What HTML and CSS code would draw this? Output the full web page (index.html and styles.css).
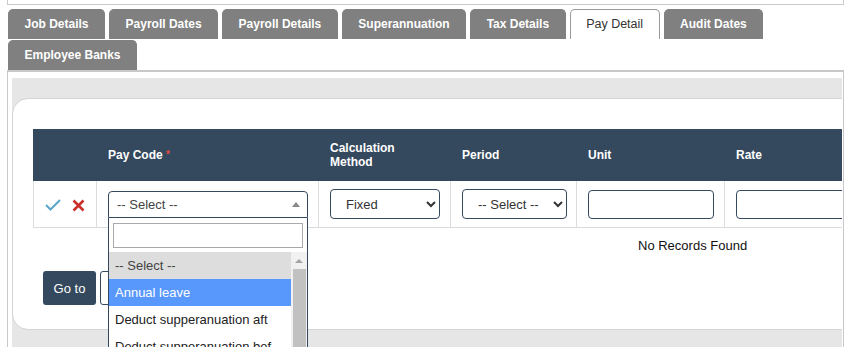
FILE: index.html
```html
<!DOCTYPE html>
<html lang="en">
<head>
    <meta charset="UTF-8">
    <title>Pay Detail</title>
    <link rel="stylesheet" href="styles.css">
</head>
<body>
    <div class="top-box"></div>

    <ul class="tabs">
        <li class="tab">Job Details</li>
        <li class="tab">Payroll Dates</li>
        <li class="tab">Payroll Details</li>
        <li class="tab">Superannuation</li>
        <li class="tab">Tax Details</li>
        <li class="tab active">Pay Detail</li>
        <li class="tab">Audit Dates</li>
        <li class="tab">Employee Banks</li>
    </ul>

    <div class="panel">
        <div class="scroller">
            <div class="card">
                <table class="grid">
                    <colgroup>
                        <col style="width:63px">
                        <col style="width:222px">
                        <col style="width:132px">
                        <col style="width:126px">
                        <col style="width:148px">
                        <col style="width:170px">
                    </colgroup>
                    <thead>
                        <tr>
                            <th></th>
                            <th>Pay Code <span class="req">*</span></th>
                            <th>Calculation<br>Method</th>
                            <th>Period</th>
                            <th>Unit</th>
                            <th>Rate</th>
                        </tr>
                    </thead>
                    <tbody>
                        <tr>
                            <td class="actions">
                                <svg class="icon-ok" width="16" height="12" viewBox="0 0 16 12">
                                    <path d="M1 6 L5.5 10.5 L15 1" fill="none" stroke="#5ba6c6" stroke-width="2"/>
                                </svg>
                                <svg class="icon-cancel" width="13" height="13" viewBox="0 0 13 13">
                                    <path d="M1.5 1.5 L11.5 11.5 M11.5 1.5 L1.5 11.5" fill="none" stroke="#c9302c" stroke-width="2.6"/>
                                </svg>
                            </td>
                            <td>
                                <div class="combo">
                                    <div class="combo-box">
                                        <span class="combo-text">-- Select --</span>
                                        <span class="combo-arrow"></span>
                                    </div>
                                    <div class="combo-drop">
                                        <div class="combo-search"><input type="text"></div>
                                        <div class="combo-list">
                                            <ul class="options">
                                                <li class="opt opt-placeholder">-- Select --</li>
                                                <li class="opt opt-hover">Annual leave</li>
                                                <li class="opt">Deduct supperanuation aft</li>
                                                <li class="opt">Deduct supperanuation bef</li>
                                            </ul>
                                            <div class="sbar">
                                                <span class="sbar-up"></span>
                                                <span class="sbar-thumb"></span>
                                            </div>
                                        </div>
                                    </div>
                                </div>
                            </td>
                            <td>
                                <select class="sel sel-calc">
                                    <option>Fixed</option>
                                    <option>Percentage</option>
                                </select>
                            </td>
                            <td>
                                <select class="sel sel-period">
                                    <option>-- Select --</option>
                                    <option>Weekly</option>
                                    <option>Monthly</option>
                                </select>
                            </td>
                            <td><input class="field" type="text"></td>
                            <td><input class="field" type="text"></td>
                        </tr>
                    </tbody>
                </table>

                <div class="empty">No Records Found</div>

                <div class="pager">
                    <button class="btn-goto" type="button">Go to</button>
                    <input class="page-input" type="text">
                </div>
            </div>
        </div>
    </div>
</body>
</html>
```

FILE: styles.css
```css
html, body {
    overflow: hidden;
}
body {
    margin: 0;
    font-family: "Liberation Sans", Arial, sans-serif;
    font-size: 13px;
    color: #222;
    background-color: #fff;
}

/* box left over from the section above */
.top-box {
    height: 4px;
    margin: 0 2px 0 7px;
    border: 1px solid #cacaca;
    border-top: none;
}

/* tabs */
.tabs {
    display: flex;
    flex-wrap: wrap;
    gap: 1px 4px;
    margin: 4px 0 0 8px;
    padding: 0;
    list-style: none;
}
.tab {
    box-sizing: border-box;
    height: 30px;
    line-height: 28px;
    padding: 0 15.5px;
    background-color: #808080;
    border: 1px solid #808080;
    border-bottom: none;
    border-radius: 5px 5px 0 0;
    color: #fff;
    font-size: 12px;
    font-weight: bold;
}
.tab.active {
    background-color: #fff;
    border-color: #9a9a9a;
    color: #333;
    font-weight: normal;
    font-size: 12.5px;
}

/* panel */
.panel {
    margin: 0 2px 0 7px;
    border: 1px solid #c8c8c8;
    border-top-width: 2px;
    padding: 6px 1px 0 4px;
}
.scroller {
    background-color: #e6e6e6;
    padding: 20px 0 40px 0;
    overflow: hidden;
}
.card {
    width: max-content;
    background-color: #fff;
    border: 1px solid #d4d4d4;
    border-radius: 16px 0 0 16px;
    padding: 30px 20px 24px 20px;
}

/* grid */
.grid {
    table-layout: fixed;
    width: 861px;
    border-collapse: separate;
    border-spacing: 0;
}
.grid th {
    height: 52px;
    padding: 0 8px 0 11px;
    border-left: 1px solid #34495e;
    background-color: #34495e;
    color: #fff;
    font-size: 12px;
    font-weight: bold;
    text-align: left;
    line-height: 14px;
}
.grid .req {
    color: #e74c3c;
    font-size: 10px;
    vertical-align: top;
}
.grid td {
    padding: 8px 10px 8px 11px;
    border-left: 1px solid #dcdcdc;
    border-bottom: 1px solid #dcdcdc;
    vertical-align: middle;
}
.grid td.actions {
    padding: 8px 0;
    text-align: center;
}
.icon-ok {
    vertical-align: middle;
    margin-right: 7px;
}
.icon-cancel {
    vertical-align: middle;
}

.sel {
    box-sizing: border-box;
    height: 30px;
    padding: 0 4px 0 11px;
    border: 1px solid #34495e;
    border-radius: 4px;
    background-color: #fff;
    font-family: inherit;
    font-size: 13px;
    color: #333;
}
.sel-calc {
    width: 110px;
}
.sel-period {
    width: 105px;
}
.field {
    box-sizing: border-box;
    width: 100%;
    height: 29px;
    border: 1px solid #34495e;
    border-radius: 4px;
    font-family: inherit;
    font-size: 13px;
}

/* select2 style combo, open */
.combo {
    position: relative;
}
.combo-box {
    box-sizing: border-box;
    height: 27px;
    display: flex;
    align-items: center;
    justify-content: space-between;
    padding: 0 7px 0 8px;
    border: 1px solid #34495e;
    border-radius: 4px 4px 0 0;
    color: #444;
}
.combo-arrow {
    width: 0;
    height: 0;
    border-left: 4px solid transparent;
    border-right: 4px solid transparent;
    border-bottom: 5px solid #888;
}
.combo-drop {
    position: absolute;
    top: 100%;
    left: 0;
    right: 0;
    z-index: 10;
    background-color: #fff;
    border: 1px solid #34495e;
    border-top: none;
}
.combo-search {
    padding: 5px 4px 4px 4px;
}
.combo-search input {
    box-sizing: border-box;
    display: block;
    width: 100%;
    height: 25px;
    border: 1px solid #aaa;
}
.combo-list {
    display: flex;
    height: 110px;
    overflow: hidden;
}
.options {
    flex: 1;
    margin: 0;
    padding: 0;
    list-style: none;
}
.opt {
    height: 27px;
    line-height: 27px;
    padding: 0 6px;
    white-space: nowrap;
    overflow: hidden;
    color: #222;
}
.opt-placeholder {
    background-color: #ddd;
    color: #444;
}
.opt-hover {
    background-color: #5897fb;
    color: #fff;
}
.sbar {
    width: 16px;
    background-color: #f1f1f1;
    display: flex;
    flex-direction: column;
    align-items: center;
}
.sbar-up {
    margin-top: 7px;
    width: 0;
    height: 0;
    border-left: 4px solid transparent;
    border-right: 4px solid transparent;
    border-bottom: 4px solid #a3a3a3;
}
.sbar-thumb {
    margin-top: 6px;
    width: 13px;
    height: 90px;
    background-color: #c1c1c1;
}

/* footer of the grid */
.empty {
    margin-top: 10px;
    padding-left: 605px;
    line-height: 16px;
    font-size: 13px;
    color: #111;
}
.pager {
    display: flex;
    gap: 4px;
    margin-top: 17px;
    padding-left: 10px;
}
.btn-goto {
    height: 34px;
    width: 53px;
    padding: 0;
    border: none;
    border-radius: 3px;
    background-color: #34495e;
    color: #fff;
    font-family: inherit;
    font-size: 13px;
}
.page-input {
    box-sizing: border-box;
    width: 120px;
    height: 34px;
    border: 1px solid #34495e;
    border-radius: 3px;
}
```
